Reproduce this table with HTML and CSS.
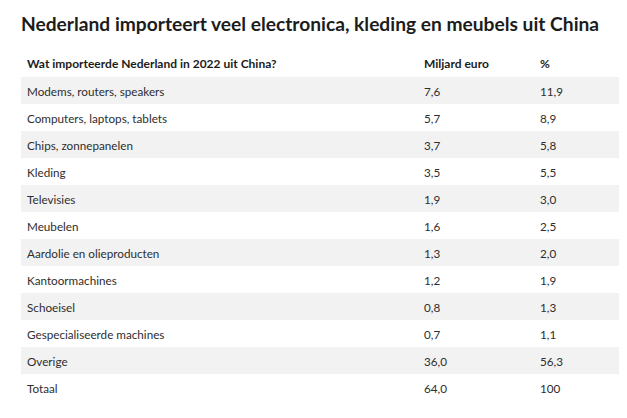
FILE: index.html
```html
<!DOCTYPE html>
<html lang="nl">
<head>
<meta charset="utf-8">
<link rel="stylesheet" href="styles.css">
</head>
<body>
<main class="page">
  <h1 class="title">Nederland importeert veel electronica, kleding en meubels uit China</h1>
  <div class="table">
    <div class="row head"><span>Wat importeerde Nederland in 2022 uit China?</span><span>Miljard euro</span><span>%</span></div>
    <div class="row"><span>Modems, routers, speakers</span><span>7,6</span><span>11,9</span></div>
    <div class="row"><span>Computers, laptops, tablets</span><span>5,7</span><span>8,9</span></div>
    <div class="row"><span>Chips, zonnepanelen</span><span>3,7</span><span>5,8</span></div>
    <div class="row"><span>Kleding</span><span>3,5</span><span>5,5</span></div>
    <div class="row"><span>Televisies</span><span>1,9</span><span>3,0</span></div>
    <div class="row"><span>Meubelen</span><span>1,6</span><span>2,5</span></div>
    <div class="row"><span>Aardolie en olieproducten</span><span>1,3</span><span>2,0</span></div>
    <div class="row"><span>Kantoormachines</span><span>1,2</span><span>1,9</span></div>
    <div class="row"><span>Schoeisel</span><span>0,8</span><span>1,3</span></div>
    <div class="row"><span>Gespecialiseerde machines</span><span>0,7</span><span>1,1</span></div>
    <div class="row"><span>Overige</span><span>36,0</span><span>56,3</span></div>
    <div class="row"><span>Totaal</span><span>64,0</span><span>100</span></div>
  </div>
</main>
</body>
</html>
```

FILE: styles.css
```css
html, body {
  margin: 0;
  padding: 0;
  background: #ffffff;
}
.page {
  padding: 11px 8px 0 21px;
  font-family: "Lato", "Noto Sans", sans-serif;
  color: #2e2e2e;
}
.title {
  margin: 0 0 13px 0;
  font-size: 19.2px;
  line-height: 26px;
  font-weight: 700;
  color: #1c1c1c;
  white-space: nowrap;
}
.table {
  width: 598px;
  display: flex;
  flex-direction: column;
}
.row {
  display: grid;
  grid-template-columns: 397px 116px 1fr;
  height: 27px;
  align-items: center;
  font-size: 11.7px;
}
.row span {
  padding-left: 6px;
}
.row:nth-child(even) {
  background: #f2f2f2;
}
.head {
  font-weight: 700;
  font-size: 12px;
  color: #1c1c1c;
}
```
